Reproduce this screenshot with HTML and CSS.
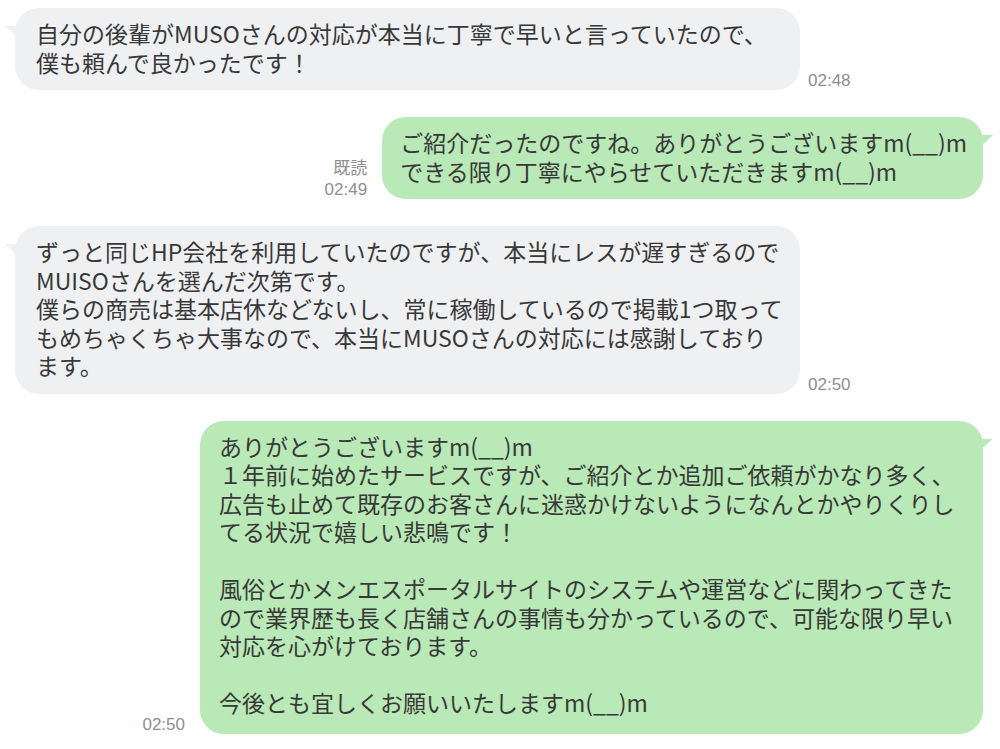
FILE: index.html
```html
<!DOCTYPE html>
<html lang="ja">
<head>
<meta charset="utf-8">
<title>Chat</title>
<link rel="stylesheet" href="styles.css">
</head>
<body>
<div class="chat">
  <div class="row in">
    <div class="bubble gray wide">自分の後輩がMUSOさんの対応が本当に丁寧で早いと言っていたので、<br>僕も頼んで良かったです！</div>
    <div class="meta"><span class="time">02:48</span></div>
  </div>

  <div class="row out">
    <div class="meta right"><span class="read">既読</span><span class="time">02:49</span></div>
    <div class="bubble green small">ご紹介だったのですね。ありがとうございますm(__)m<br>できる限り丁寧にやらせていただきますm(__)m</div>
  </div>

  <div class="row in">
    <div class="bubble gray wide">ずっと同じHP会社を利用していたのですが、本当にレスが遅すぎるので<br>MUISOさんを選んだ次第です。<br>僕らの商売は基本店休などないし、常に稼働しているので掲載1つ取って<br>もめちゃくちゃ大事なので、本当にMUSOさんの対応には感謝しており<br>ます。</div>
    <div class="meta"><span class="time">02:50</span></div>
  </div>

  <div class="row out">
    <div class="meta right"><span class="time">02:50</span></div>
    <div class="bubble green big">ありがとうございますm(__)m<br>１年前に始めたサービスですが、ご紹介とか追加ご依頼がかなり多く、<br>広告も止めて既存のお客さんに迷惑かけないようになんとかやりくりし<br>てる状況で嬉しい悲鳴です！<br><br>風俗とかメンエスポータルサイトのシステムや運営などに関わってきた<br>ので業界歴も長く店舗さんの事情も分かっているので、可能な限り早い<br>対応を心がけております。<br><br>今後とも宜しくお願いいたしますm(__)m</div>
  </div>
</div>
</body>
</html>
```

FILE: styles.css
```css
* { box-sizing: border-box; }
html, body {
  margin: 0;
  padding: 0;
  background: #ffffff;
}
body {
  font-family: "Noto Sans CJK JP", "Noto Sans", sans-serif;
  color: #383838;
}
.chat {
  display: flex;
  flex-direction: column;
  gap: 27px;
  padding: 8px 17px 0 15px;
}
.row {
  display: flex;
  align-items: flex-end;
}
.row.in {
  justify-content: flex-start;
  gap: 8px;
}
.row.out {
  justify-content: flex-end;
  gap: 15px;
}
.bubble {
  position: relative;
  font-size: 23px;
  line-height: 28.5px;
  padding: 11px 20px 14px 21px;
  border-radius: 24px;
  white-space: nowrap;
}
.bubble::before {
  content: "";
  position: absolute;
  top: 18px;
  width: 12px;
  height: 11px;
}
.gray { background: #eff0f2; }
.gray::before {
  left: -10px;
  background: #eff0f2;
  clip-path: polygon(0 0, 100% 0, 100% 100%);
}
.green { background: #b8e9b6; padding-left: 20px; }
.green::before {
  right: -10px;
  background: #b8e9b6;
  clip-path: polygon(0 0, 100% 0, 0 100%);
}
.small { padding-left: 18px; padding-right: 16px; }
.wide { width: 785px; }
.big { width: 783px; padding-left: 19px; padding-bottom: 17px; }
.meta {
  display: flex;
  flex-direction: column;
  font-family: "Liberation Sans", Arial, sans-serif;
  font-size: 17px;
  line-height: 22px;
  color: #8e8e93;
  margin-bottom: -2px;
}
.meta.right {
  align-items: flex-end;
}
.read {
  font-family: "Noto Sans CJK JP", sans-serif;
  font-size: 17px;
  line-height: 24px;
}
```
